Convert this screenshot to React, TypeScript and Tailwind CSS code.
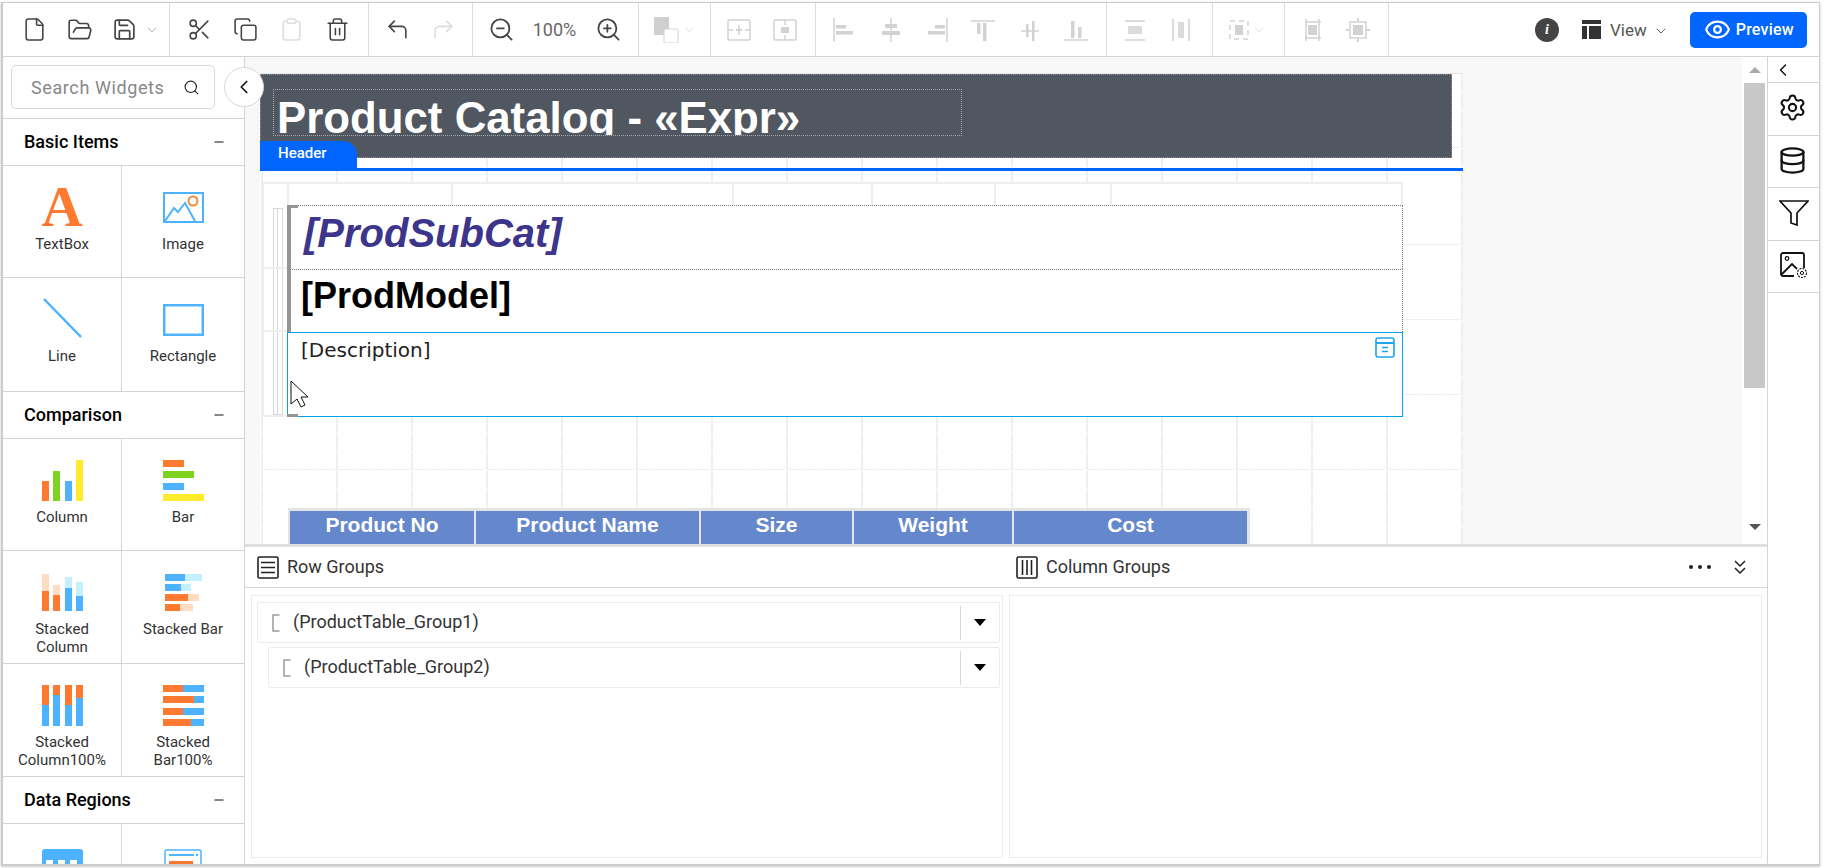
import React from 'react';
import { File, FolderOpen, Save, Scissors, Copy, Clipboard, Trash2, CornerUpLeft, CornerUpRight, ZoomIn, ZoomOut, Search, ChevronLeft, ChevronDown, Settings, Database, Eye, Minus } from 'lucide-react';

const DIS = '#d2d2d2';
const Tool = ({ children, w = 46 }: { children: React.ReactNode; w?: number }) => (
  <div className="flex h-full items-center justify-center shrink-0" style={{ width: w }}>{children}</div>
);
const Sec = ({ w, pl, children }: { w: number; pl: number; children: React.ReactNode }) => (
  <div className="flex h-[53px] shrink-0 items-center border-r border-[#dcdcdc]" style={{ width: w, paddingLeft: pl }}>{children}</div>
);
const I = ({ children, w = 24, h = 24, vb = '0 0 24 24', c = DIS }: { children: React.ReactNode; w?: number; h?: number; vb?: string; c?: string }) => (
  <svg width={w} height={h} viewBox={vb} fill="none" stroke={c} strokeWidth="1.5" style={{ color: c }}>{children}</svg>
);
const Chev = ({ c = '#8a8a8a' }: { c?: string }) => <ChevronDown size={14} color={c} strokeWidth={1.2} />;

const MergeA = () => <I><rect x="1" y="2" width="22" height="20" rx="1.5" /><path d="M12 7v10M1 12h5M18 12h5" /><path d="M9 11h6v2H9z" fill={DIS} stroke="none" /></I>;
const MergeB = () => <I><rect x="1" y="2" width="22" height="20" rx="1.5" /><path d="M12 2v5M12 17v5" /><rect x="8" y="9" width="8" height="6" fill={DIS} stroke="none" /></I>;
const AL = () => <I><path d="M2 0v24" /><rect x="4" y="7" width="10" height="3.5" fill={DIS} stroke="none" /><rect x="4" y="13" width="17" height="3.5" fill={DIS} stroke="none" /></I>;
const AC = () => <I><path d="M12 0v24" /><rect x="6" y="6" width="12" height="4" fill={DIS} stroke="none" /><rect x="3" y="13" width="18" height="4" fill={DIS} stroke="none" /></I>;
const AR = () => <I><path d="M22 0v24" /><rect x="10" y="7" width="10" height="3.5" fill={DIS} stroke="none" /><rect x="3" y="13" width="17" height="3.5" fill={DIS} stroke="none" /></I>;
const AT = () => <I><path d="M0 3h24" /><rect x="6" y="5" width="3.5" height="11" fill={DIS} stroke="none" /><rect x="12" y="5" width="3.5" height="18" fill={DIS} stroke="none" /></I>;
const AM = () => <I><path d="M3 13h18" /><rect x="8" y="6" width="2.5" height="13" fill={DIS} stroke="none" /><rect x="14" y="3" width="2.5" height="20" fill={DIS} stroke="none" /></I>;
const AB = () => <I><path d="M0 22h24" /><rect x="7" y="3" width="3.5" height="17" fill={DIS} stroke="none" /><rect x="14" y="9" width="3.5" height="11" fill={DIS} stroke="none" /></I>;
const DH = () => <I><path d="M2 3h20M2 22h20" /><rect x="5" y="8" width="14" height="8" fill={DIS} stroke="none" opacity=".8" /></I>;
const DV = () => <I><path d="M4 1v22M20 1v22" /><rect x="9" y="4" width="6" height="16" fill={DIS} stroke="none" opacity=".8" /></I>;
const Snap = () => <I><rect x="3" y="3" width="18" height="18" strokeDasharray="5 4" /><rect x="8" y="7" width="8" height="10" fill={DIS} stroke="none" /></I>;
const Fit1 = () => <I><path d="M5 4h16M5 20h16M6 1v22M19 1v22" /><rect x="8" y="7" width="9" height="10" fill={DIS} stroke="none" /></I>;
const Fit2 = () => <I><rect x="4" y="4" width="16" height="16" /><rect x="7" y="7" width="10" height="10" fill={DIS} stroke="none" /><path d="M12 0v3M12 21v3M0 12h3M21 12h3" strokeWidth="2" /></I>;

const Widget = ({ label, icon, h }: { label: React.ReactNode; icon: React.ReactNode; h: number }) => (
  <div className="flex flex-col items-center" style={{ height: h }}>
    <div className="h-[60px] flex items-end justify-center shrink-0">{icon}</div>
    <div className="mt-[9px] text-center text-[15px] leading-[18px] text-[#333]">{label}</div>
  </div>
);
const WRow = ({ h, a, b, last }: { h: number; a: React.ReactNode; b: React.ReactNode; last?: boolean }) => (
  <div className={`grid grid-cols-[119px_122px] ${last ? '' : 'border-b border-[#d4d4d4]'}`} style={{ height: h }}>
    <div className="border-r border-[#d4d4d4] overflow-hidden">{a}</div>
    <div className="overflow-hidden">{b}</div>
  </div>
);
const SecHead = ({ t }: { t: string }) => (
  <div className="h-[47px] flex items-center justify-between pl-[21px] pr-[18px] border-b border-[#d4d4d4]">
    <span className="text-[18px] font-medium text-black pb-[2px]">{t}</span>
    <Minus size={14} color="#111" strokeWidth={2} />
  </div>
);

const O = '#ff7a30', B = '#4db2ff', G = '#7ed321', Y = '#ffeb2a', LO = '#ffdcc2', LB = '#c4efff';
const R = ({ x, y, w, h, f }: { x: number; y: number; w: number; h: number; f: string }) => <rect x={x} y={y} width={w} height={h} fill={f} />;
const Svg = ({ children, w = 41, h = 41 }: { children: React.ReactNode; w?: number; h?: number }) => <svg width={w} height={h} viewBox={`0 0 ${w} ${h}`}>{children}</svg>;

const IconCol = () => <Svg><R x={0} y={21} w={7} h={20} f={O} /><R x={11} y={11} w={7} h={30} f={G} /><R x={23} y={21} w={7} h={20} f={B} /><R x={34} y={0} w={7} h={41} f={Y} /></Svg>;
const IconBar = () => <Svg><R x={0} y={0} w={21} h={7} f={O} /><R x={0} y={11} w={31} h={7} f={G} /><R x={0} y={23} w={21} h={7} f={B} /><R x={0} y={34} w={41} h={7} f={Y} /></Svg>;
const IconSC = () => <Svg h={37}><R x={0} y={0} w={7} h={17} f={LO} /><R x={0} y={17} w={7} h={20} f={O} /><R x={11} y={11} w={7} h={10} f={LO} /><R x={11} y={21} w={7} h={16} f={O} /><R x={23} y={3} w={7} h={11} f={LB} /><R x={23} y={14} w={7} h={23} f={B} /><R x={34} y={8} w={7} h={14} f={LB} /><R x={34} y={22} w={7} h={15} f={B} /></Svg>;
const IconSB = () => <Svg w={37} h={37}><R x={0} y={0} w={20} h={7} f={B} /><R x={20} y={0} w={17} h={7} f={LB} /><R x={0} y={10} w={16} h={7} f={B} /><R x={16} y={10} w={10} h={7} f={LB} /><R x={0} y={20} w={23} h={7} f={O} /><R x={23} y={20} w={11} h={7} f={LO} /><R x={0} y={30} w={15} h={7} f={O} /><R x={15} y={30} w={13} h={7} f={LO} /></Svg>;
const IconSC100 = () => <Svg><R x={0} y={0} w={7} h={41} f={B} /><R x={0} y={0} w={7} h={20} f={O} /><R x={11} y={0} w={7} h={41} f={B} /><R x={11} y={0} w={7} h={10} f={O} /><R x={23} y={0} w={7} h={41} f={B} /><R x={23} y={0} w={7} h={20} f={O} /><R x={34} y={0} w={7} h={41} f={B} /><R x={34} y={0} w={7} h={13} f={O} /></Svg>;
const IconSB100 = () => <Svg><R x={0} y={0} w={41} h={7} f={B} /><R x={0} y={0} w={20} h={7} f={O} /><R x={0} y={11} w={41} h={7} f={B} /><R x={0} y={11} w={31} h={7} f={O} /><R x={0} y={23} w={41} h={7} f={B} /><R x={0} y={23} w={20} h={7} f={O} /><R x={0} y={34} w={41} h={7} f={B} /><R x={0} y={34} w={28} h={7} f={O} /></Svg>;

const gridClass =
  'bg-[linear-gradient(to_right,transparent_17.75px,#fff_17.75px),linear-gradient(to_bottom,transparent_17.75px,#fff_17.75px),linear-gradient(to_right,#efefef_2px,transparent_2px),linear-gradient(to_bottom,#efefef_2px,transparent_2px)] bg-[size:18.75px_18.75px,18.75px_18.75px,75px_75px,75px_75px] bg-[position:0_0,0_0,1px_0,0_73px]';

const Caret = () => <div className="w-0 h-0 border-l-[6.5px] border-r-[6.5px] border-t-[7px] border-l-transparent border-r-transparent border-t-black" />;
const Bracket = () => <svg width="8" height="18" viewBox="0 0 8 18" fill="none" stroke="#9a9a9a" strokeWidth="1.5"><path d="M7.5 1H1v16h6.5" /></svg>;
const GroupRow = ({ t, cls }: { t: string; cls: string }) => (
  <div className={`flex items-center h-[41px] border border-[#ececec] rounded-[2px] ${cls}`}>
    <div className="ml-[14px] mr-[13px]"><Bracket /></div>
    <span className="text-[18px] text-[#333] flex-1 pb-[3px]">{t}</span>
    <div className="h-[34px] w-[39px] border-l border-[#d8d8d8] flex items-center justify-center"><Caret /></div>
  </div>
);

const HeadCell = ({ w, t }: { w: number; t: string }) => (
  <div className="h-full flex items-center justify-center bg-[#6588cc] border-r-2 border-[#e4e4e4] text-white text-[21px] font-bold shrink-0 pb-[7px] font-['Liberation_Sans',Arial,sans-serif]" style={{ width: w }}>{t}</div>
);

export default function App() {
  const arial = "font-['Liberation_Sans',Arial,sans-serif]";
  return (
    <div className="w-[1824px] h-[868px] bg-white overflow-hidden font-['Roboto',sans-serif]">
      <div className="ml-[1px] mt-[2px] w-[1819px] h-[864px] flex flex-col border-t border-l-2 border-r border-b-2 border-[#cbcbcb] bg-white shadow-[0_1px_3px_rgba(0,0,0,0.2)]">
        {/* toolbar */}
        <div className="h-[53px] shrink-0 flex items-center border-b border-[#d4d4d4] box-content">
          <Sec w={167} pl={8}>
            <Tool><File size={25} color="#444" strokeWidth={1.5} /></Tool>
            <Tool><FolderOpen size={26} color="#444" strokeWidth={1.5} /></Tool>
            <Tool w={42}><Save size={25} color="#444" strokeWidth={1.6} /></Tool>
            <Chev />
          </Sec>
          <Sec w={199} pl={6}>
            <Tool><Scissors size={25} color="#444" strokeWidth={1.5} /></Tool>
            <Tool><Copy size={25} color="#444" strokeWidth={1.5} /></Tool>
            <Tool><Clipboard size={25} color="#dedede" strokeWidth={1.5} /></Tool>
            <Tool><Trash2 size={25} color="#444" strokeWidth={1.5} /></Tool>
          </Sec>
          <Sec w={104} pl={5}>
            <Tool><CornerUpLeft size={25} color="#444" strokeWidth={1.5} /></Tool>
            <Tool><CornerUpRight size={25} color="#dedede" strokeWidth={1.5} /></Tool>
          </Sec>
          <Sec w={166} pl={5}>
            <Tool><ZoomOut size={27} color="#444" strokeWidth={1.6} /></Tool>
            <div className="text-[18px] text-[#666] w-[61px] text-center shrink-0">100%</div>
            <Tool><ZoomIn size={27} color="#444" strokeWidth={1.6} /></Tool>
          </Sec>
          <Sec w={72} pl={15}>
            <svg width="26" height="26" viewBox="0 0 26 26" fill="none" className="shrink-0"><rect x="0" y="0" width="15" height="18" fill="#cfcfcf" /><rect x="10" y="12" width="14" height="14" rx="1.5" stroke="#d8d8d8" strokeWidth="1.2" fill="#fff" /><rect x="0" y="0" width="15" height="12" fill="#cfcfcf" /></svg>
            <div className="ml-[2px]"><Chev c="#d0d0d0" /></div>
          </Sec>
          <Sec w={105} pl={5}><Tool><MergeA /></Tool><Tool><MergeB /></Tool></Sec>
          <Sec w={291} pl={5}>
            <Tool w={46.4}><AL /></Tool><Tool w={46.4}><AC /></Tool><Tool w={46.4}><AR /></Tool><Tool w={46.4}><AT /></Tool><Tool w={46.4}><AM /></Tool><Tool w={46.4}><AB /></Tool>
          </Sec>
          <Sec w={106} pl={5}><Tool><DH /></Tool><Tool><DV /></Tool></Sec>
          <Sec w={72} pl={14}><Snap /><div className="ml-[1px]"><Chev c="#d0d0d0" /></div></Sec>
          <Sec w={104} pl={4}><Tool><Fit1 /></Tool><Tool><Fit2 /></Tool></Sec>
          <div className="flex-1 flex items-center h-full">
            <div className="ml-[146px] w-[24px] h-[24px] rounded-full bg-[#444] flex items-center justify-center text-white text-[14px] italic font-bold font-['Liberation_Serif',serif] shrink-0">i</div>
            <svg width="19" height="19" viewBox="0 0 19 19" className="ml-[23px] shrink-0"><rect width="19" height="4" fill="#333" /><rect y="6" width="5" height="13" fill="#333" /><rect x="7" y="6" width="12" height="13" fill="#333" /></svg>
            <span className="ml-[9px] text-[17px] text-[#555] mt-[3px]">View</span>
            <div className="ml-[6px] mt-[3px]"><ChevronDown size={16} color="#555" strokeWidth={1.4} /></div>
            <div className="ml-[21px] w-[117px] h-[36px] bg-[#0066ff] rounded-[5px] flex items-center pl-[14px] gap-[5px] text-white text-[16px] font-medium tracking-[0.2px] shrink-0">
              <Eye size={27} color="#fff" strokeWidth={2} /><span>Preview</span>
            </div>
          </div>
        </div>

        <div className="flex-1 flex min-h-0">
          {/* left */}
          <div className="w-[242px] shrink-0 border-r border-[#d4d4d4] relative overflow-hidden">
            <div className="h-[62px] border-b border-[#d4d4d4] pt-[8px] pl-[8px]">
              <div className="w-[204px] h-[44px] border border-[#d8d8d8] rounded-[5px] flex items-center pl-[19px] text-[18px] text-[#888]">
                <span className="w-[152px] tracking-[0.6px] whitespace-nowrap">Search Widgets</span>
                <Search size={17} color="#222" strokeWidth={1.6} />
              </div>
            </div>
            <SecHead t="Basic Items" />
            <WRow h={112} a={
              <Widget h={112} label="TextBox" icon={<span className="font-['Liberation_Serif',serif] font-bold text-[57px] leading-[57px] text-[#ff7a30] block -mb-[9px]">A</span>} />
            } b={
              <Widget h={112} label="Image" icon={<svg width="41" height="32" viewBox="0 0 41 32" className="mb-[2px]" fill="none" stroke="#4db2ff" strokeWidth="2"><rect x="1" y="1" width="39" height="29" /><path d="M2 29l9-13 4 4 7-9 10 18" /><circle cx="30" cy="9" r="4.5" stroke="#f08c3c" /></svg>} />
            } />
            <WRow h={114} a={
              <Widget h={114} label="Line" icon={<svg width="41" height="40" viewBox="0 0 41 40" fill="none" stroke="#4db2ff" strokeWidth="2.5"><path d="M2 1l37 38" /></svg>} />
            } b={
              <Widget h={114} label="Rectangle" icon={<svg width="41" height="32" viewBox="0 0 41 32" className="mb-[2px]" fill="none" stroke="#4db2ff" strokeWidth="2.5"><rect x="1.2" y="1.2" width="38.6" height="29.6" /></svg>} />
            } />
            <SecHead t="Comparison" />
            <WRow h={112} a={<Widget h={112} label="Column" icon={<div className="-mb-[2px]"><IconCol /></div>} />} b={<Widget h={112} label="Bar" icon={<div className="-mb-[2px]"><IconBar /></div>} />} />
            <WRow h={113} a={<Widget h={113} label={<>Stacked<br />Column</>} icon={<IconSC />} />} b={<Widget h={113} label="Stacked Bar" icon={<IconSB />} />} />
            <WRow h={113} a={<Widget h={113} label={<>Stacked<br />Column100%</>} icon={<div className="-mb-[2px]"><IconSC100 /></div>} />} b={<Widget h={113} label={<>Stacked<br />Bar100%</>} icon={<div className="-mb-[2px]"><IconSB100 /></div>} />} />
            <SecHead t="Data Regions" />
            <WRow h={60} last a={
              <div className="flex justify-center pt-[25px]"><svg width="41" height="30" viewBox="0 0 41 30"><path d="M3 0h35a3 3 0 013 3v27H0V3a3 3 0 013-3z" fill="#4db2ff" /><R x={4} y={11} w={7} h={12} f="#fff" /><R x={16} y={11} w={7} h={12} f="#fff" /><R x={28} y={11} w={7} h={12} f="#fff" /></svg></div>
            } b={
              <div className="flex justify-center pt-[25px]"><svg width="38" height="30" viewBox="0 0 38 30" fill="none"><rect x="1" y="1" width="36" height="29" rx="2" stroke="#4db2ff" strokeWidth="1.5" /><path d="M5 6h25M32 6h2" stroke="#4db2ff" strokeWidth="2" /><rect x="5" y="12" width="24" height="5" fill="#ff7a30" /></svg></div>
            } />
          </div>

          {/* centre */}
          <div className="flex-1 min-w-0 flex flex-col relative">
            <div className="absolute left-[-21px] top-[10px] w-[40px] h-[40px] rounded-full bg-white border border-[#d8d8d8] flex items-center justify-center z-20">
              <ChevronLeft size={22} color="#111" strokeWidth={1.8} />
            </div>
            <div className="h-[487px] shrink-0 flex">
              {/* canvas */}
              <div className="w-[1497px] bg-[#f8f8f8] pt-[16px] pl-[15px] overflow-hidden">
                <div className="w-[1203px] h-[500px] bg-white border-t border-[#e4e4e4]">
                  {/* header band */}
                  <div className={`relative h-[97px] flex flex-col ${gridClass}`}>
                    <div className="w-[1192px] h-[84px] bg-[#515761] border border-dotted border-[#8a8e95] pt-[14px] pl-[12px]">
                      <div className="w-[689px] h-[47px] border border-dotted border-[#a5a8ad] overflow-hidden pl-[3px] pt-[3px]">
                        <div className={`${arial} text-white font-bold text-[43.8px] leading-[50px] whitespace-nowrap`}>Product Catalog - «Expr»</div>
                      </div>
                    </div>
                    <div className="mt-auto h-[3px] bg-[#0066ff]" />
                    <div className="absolute left-0 top-[67px] w-[97px] h-[28px] bg-[#0066ff] rounded-tr-[14px] pl-[18px] text-white text-[15px] font-medium leading-[24px]">Header</div>
                  </div>
                  {/* body */}
                  <div className={`h-[400px] pt-[11px] pl-[2px] ${gridClass}`}>
                    <div className="w-[1141px] relative bg-white">
                      <div className="h-[23px] flex border-t-2 border-[#eeeeee] border-r-2">
                        <div className="w-[25px] border-l-2 border-[#eeeeee]" />
                        <div className="w-[164px] border-l-2 border-[#eeeeee]" />
                        <div className="w-[281px] border-l-2 border-[#eeeeee]" />
                        <div className="w-[139px] border-l-2 border-[#eeeeee]" />
                        <div className="w-[123px] border-l-2 border-[#eeeeee]" />
                        <div className="w-[116px] border-l-2 border-[#eeeeee]" />
                        <div className="flex-1 border-l-2 border-[#eeeeee]" />
                      </div>
                      <div className="flex">
                        <div className="w-[25px] shrink-0 border-l-2 border-[#eeeeee] border-b-2 flex justify-center pt-[3px] pl-[4px] relative">
                          <div className="w-[5px] h-[207px] border border-[#d8d8d8]" />
                          <div className="w-[5px] h-[207px] border border-[#d8d8d8] border-l-0" />
                          <div className="absolute left-0 right-0 top-[62px] h-[2px] bg-[#eeeeee]" />
                          <div className="absolute left-0 right-0 top-[125px] h-[2px] bg-[#eeeeee]" />
                        </div>
                        <div className="w-[1116px] relative">
                          <div className="h-[64px] border-t border-r border-dotted border-[#777] pl-[17px] pb-[10px] flex items-center">
                            <span className={`${arial} italic font-bold text-[40px] text-[#3d348b]`}>[ProdSubCat]</span>
                          </div>
                          <div className="h-[63px] border-t border-r border-dotted border-[#777] pl-[14px] pb-[10px] flex items-center">
                            <span className={`${arial} font-bold text-[36px] text-black`}>[ProdModel]</span>
                          </div>
                          <div className="h-[85px] border border-[#00a3e8] pl-[13px] pt-[3px] relative">
                            <span className="font-['DejaVu_Sans',sans-serif] text-[20px] leading-[28px] text-[#222]">[Description]</span>
                            <svg width="20" height="21" viewBox="0 0 20 21" fill="none" stroke="#1aa7e8" strokeWidth="1.6" className="absolute right-[7px] top-[4px]"><rect x="1" y="1" width="18" height="19" rx="2" /><path d="M1 6h18" strokeWidth="2" /><path d="M7 10.5h6M7 14.5h6" /></svg>
                          </div>
                          <div className="absolute left-0 top-0 w-[11px] h-[127px] border-l-[4px] border-t-[3px] border-[#959595] pointer-events-none" />
                          <div className="absolute left-0 top-[209px] w-[11px] h-[3px] bg-[#959595] pointer-events-none" />
                          <svg width="20" height="28" viewBox="0 0 20 28" className="absolute left-[3px] top-[175px]" fill="#fff" stroke="#111" strokeWidth="1"><path d="M1 1v23l6-5 4 8 4-2-4-8h7z" /></svg>
                        </div>
                      </div>
                    </div>
                    <div className="ml-[26px] mt-[91px] w-[962px] h-[38px] flex border-t-[3px] border-l-2 border-r-[3px] border-[#e4e4e4]">
                      <HeadCell w={186} t="Product No" />
                      <HeadCell w={225} t="Product Name" />
                      <HeadCell w={153} t="Size" />
                      <HeadCell w={160} t="Weight" />
                      <div className={`flex-1 h-full flex items-center justify-center bg-[#6588cc] text-white text-[21px] font-bold pb-[7px] ${arial}`}>Cost</div>
                    </div>
                  </div>
                </div>
              </div>
              {/* scrollbar */}
              <div className="flex-1 flex flex-col bg-white pl-[2px]">
                <div className="h-[26px] flex items-center justify-center w-[21px]"><div className="w-0 h-0 border-l-[6px] border-r-[6px] border-b-[6px] border-l-transparent border-r-transparent border-b-[#aaaaaa]" /></div>
                <div className="w-[21px] h-[305px] bg-[#c8c8c8]" />
                <div className="flex-1 flex items-end justify-center w-[21px] pb-[14px]"><div className="w-0 h-0 border-l-[6px] border-r-[6px] border-t-[6px] border-l-transparent border-r-transparent border-t-[#555]" /></div>
              </div>
            </div>
            {/* bottom */}
            <div className="flex-1 min-h-0 border-t-[3px] border-[#dfdfdf] flex flex-col">
              <div className="h-[41px] shrink-0 border-b border-[#d4d4d4] flex items-center">
                <div className="w-[771px] flex items-center pl-[12px] shrink-0">
                  <svg width="22" height="23" viewBox="0 0 22 23" fill="none" stroke="#222" strokeWidth="1.6"><rect x="1" y="1" width="20" height="21" rx="1.5" /><path d="M4 6.5h14M4 11.5h14M4 16.5h14" /></svg>
                  <span className="ml-[8px] text-[18px] text-[#333] pb-[2px]">Row Groups</span>
                </div>
                <div className="flex items-center">
                  <svg width="22" height="23" viewBox="0 0 22 23" fill="none" stroke="#222" strokeWidth="1.6"><rect x="1" y="1" width="20" height="21" rx="1.5" /><path d="M6.5 4v15M11 4v15M15.5 4v15" /></svg>
                  <span className="ml-[8px] text-[18px] text-[#333] pb-[2px]">Column Groups</span>
                </div>
                <div className="ml-auto flex items-center gap-[5px] mr-[65px]">
                  <span className="w-[4px] h-[4px] rounded-full bg-[#222]" /><span className="w-[4px] h-[4px] rounded-full bg-[#222]" /><span className="w-[4px] h-[4px] rounded-full bg-[#222]" />
                </div>
                <svg width="14" height="14" viewBox="0 0 14 14" fill="none" stroke="#222" strokeWidth="1.5" className="mr-[20px] -ml-[43px]"><path d="M2 1l5 5 5-5M2 8l5 5 5-5" /></svg>
              </div>
              <div className="flex-1 min-h-0 flex pt-[7px] pb-[6px] pl-[6px] gap-[6px]">
                <div className="w-[752px] border border-[#ececec] pt-[6px] pl-[5px]">
                  <GroupRow t="(ProductTable_Group1)" cls="w-[743px]" />
                  <GroupRow t="(ProductTable_Group2)" cls="w-[732px] ml-[11px] mt-[4px]" />
                </div>
                <div className="w-[753px] border border-[#ececec]" />
              </div>
            </div>
          </div>

          {/* right */}
          <div className="w-[52px] shrink-0 border-l border-[#d4d4d4] flex flex-col">
            <div className="h-[26px] border-b border-[#d4d4d4] pl-[5px] flex items-center"><ChevronLeft size={20} color="#111" strokeWidth={1.8} /></div>
            <div className="h-[53px] border-b border-[#d4d4d4] flex items-center justify-center pb-[3px] pr-[2px]"><Settings size={29} color="#111" strokeWidth={1.7} /></div>
            <div className="h-[52px] border-b border-[#d4d4d4] flex items-center justify-center pb-[2px] pr-[2px]"><Database size={29} color="#111" strokeWidth={1.9} /></div>
            <div className="h-[53px] border-b border-[#d4d4d4] flex items-center justify-center pb-[2px]">
              <svg width="30" height="28" viewBox="0 0 30 28" fill="none" stroke="#111" strokeWidth="1.7"><path d="M1 2h28L18 14v12l-6-2V14z" /></svg>
            </div>
            <div className="h-[52px] border-b border-[#d4d4d4] flex items-center justify-center pb-[2px]">
              <svg width="28" height="28" viewBox="0 0 28 28" fill="none" stroke="#111" strokeWidth="1.6"><path d="M14 24H3a2 2 0 01-2-2V3a2 2 0 012-2h19a2 2 0 012 2v13" strokeWidth="1.8" /><circle cx="7" cy="6.5" r="1.8" strokeWidth="1.2" /><path d="M1 23l11-11 5 5" strokeWidth="1.8" /><circle cx="22" cy="21" r="4.5" strokeWidth="1.1" strokeDasharray="2 1" /><circle cx="22" cy="21" r="1.6" strokeWidth="1" /></svg>
            </div>
          </div>
        </div>
      </div>
    </div>
  );
}
